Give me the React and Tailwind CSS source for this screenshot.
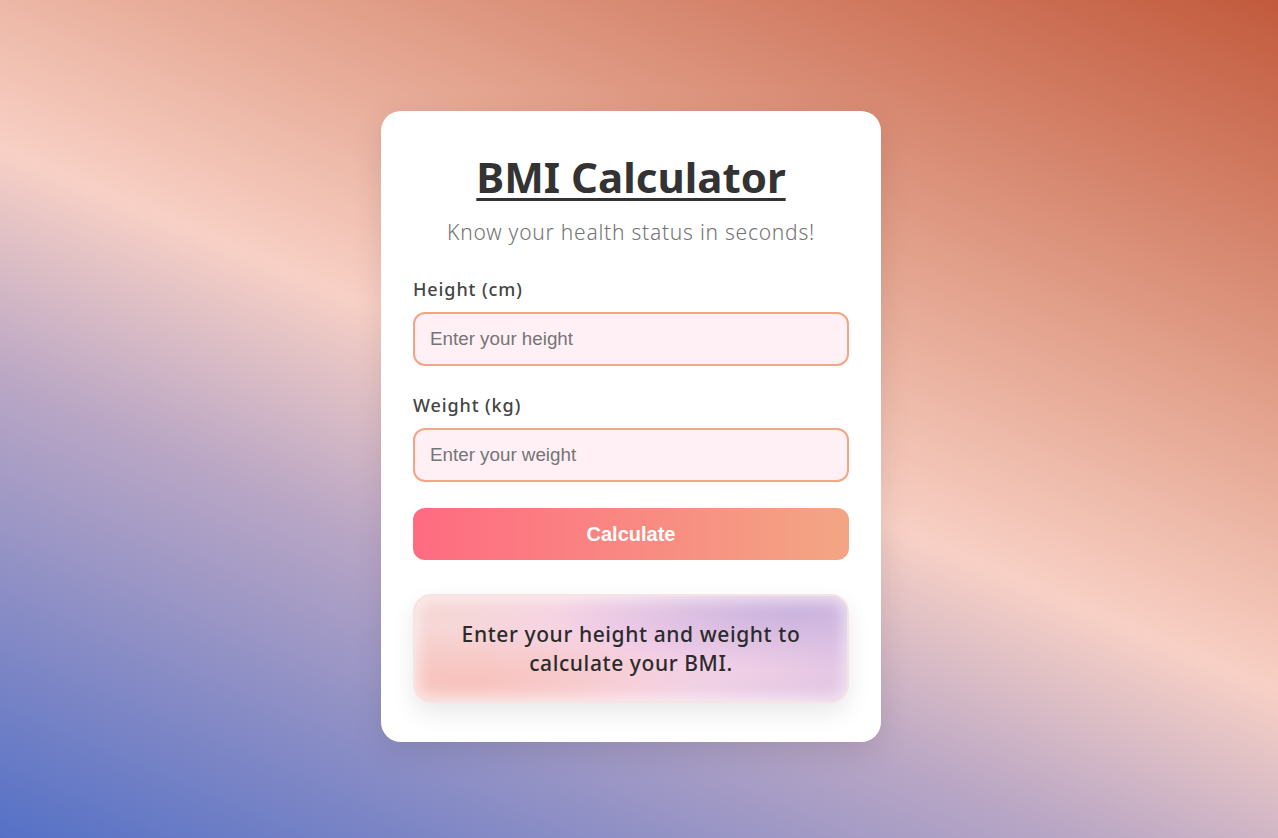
export default function App() {
  return (
    <div className="min-h-screen h-screen w-full box-border flex items-center justify-center pr-4 pt-[15px] bg-[linear-gradient(23deg,#5571c6_0%,#b9a6c5_33%,#f8d0c5_50%,#e7ab97_66%,#c25a3d_100%)] font-['Noto_Sans',sans-serif]">
      <div className="w-[500px] h-[631px] box-border bg-white rounded-[20px] px-8 pt-8 pb-[39px] shadow-[0_10px_30px_rgba(0,0,0,0.1)] flex flex-col">
        <h1 className="mt-[9px] h-[50px] leading-[50px] text-[42px] font-bold text-[#333] text-center underline decoration-[3px] underline-offset-[5px]">
          BMI Calculator
        </h1>
        <p className="mt-4 h-[28px] leading-[28px] text-[21px] tracking-[0.75px] font-light text-[#747474] text-center">
          Know your health status in seconds!
        </p>
        <label className="mt-[31px] h-[24px] leading-[24px] text-[18px] tracking-[0.9px] font-medium text-[#444]">
          Height (cm)
        </label>
        <input
          type="number"
          placeholder="Enter your height"
          className="mt-[11px] h-[54px] w-full box-border border-2 border-[#f4a586] bg-[#fff0f5] rounded-xl px-[15px] text-[18.8px] font-['Liberation_Sans',Arial,sans-serif] text-[#333] placeholder:text-[#757575] outline-none"
        />
        <label className="mt-[27px] h-[24px] leading-[24px] text-[18px] tracking-[0.9px] font-medium text-[#444]">
          Weight (kg)
        </label>
        <input
          type="number"
          placeholder="Enter your weight"
          className="mt-[11px] h-[54px] w-full box-border border-2 border-[#f4a586] bg-[#fff0f5] rounded-xl px-[15px] text-[18.8px] font-['Liberation_Sans',Arial,sans-serif] text-[#333] placeholder:text-[#757575] outline-none"
        />
        <button className="mt-[26px] h-[52px] w-full rounded-xl bg-[linear-gradient(to_right,#ff6b81,#f3a683)] text-white text-[20px] font-bold font-['Liberation_Sans',Arial,sans-serif]">
          Calculate
        </button>
        <div className="mt-[34px] h-[109px] w-[436px] mx-auto box-border rounded-[18px] border-2 border-[#f6e4e2] shadow-[0_10px_25px_rgba(0,0,0,0.09),inset_0_0_14px_4px_rgba(255,255,255,0.55)] bg-[radial-gradient(ellipse_at_88%_18%,#cbb4df_0%,rgba(203,180,223,0)_45%),radial-gradient(ellipse_at_12%_80%,#f8c2bd_0%,rgba(248,194,189,0)_45%),radial-gradient(ellipse_at_60%_35%,#f7cfe8_0%,rgba(247,207,232,0)_55%),linear-gradient(to_right,#f6d7d4,#f6d6e6,#e3c6e4)] flex items-center justify-center px-4">
          <p className="text-center text-[21px] leading-[28.5px] tracking-[0.6px] font-medium text-[#2b2b2b]">
            Enter your height and weight to calculate your BMI.
          </p>
        </div>
      </div>
    </div>
  );
}
